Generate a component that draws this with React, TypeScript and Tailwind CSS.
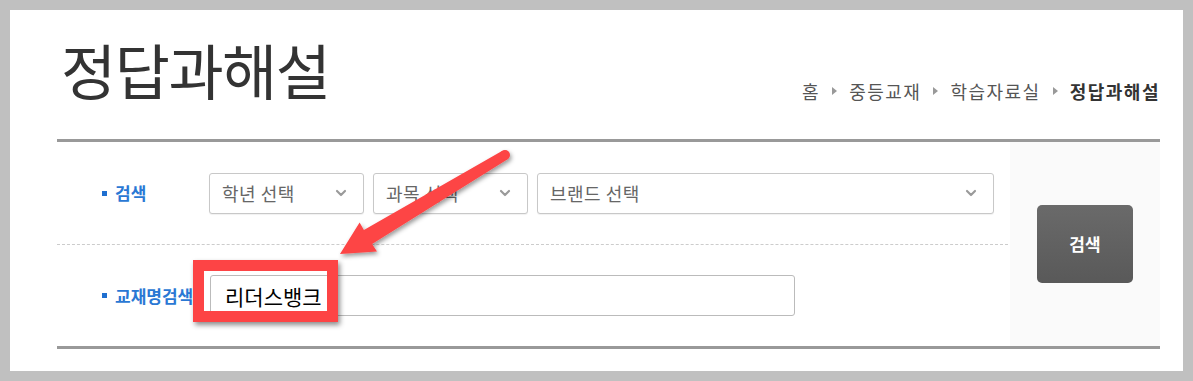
import { ChevronDown } from "lucide-react";

const font = { fontFamily: '"Noto Sans CJK KR", "Noto Sans", sans-serif' };

function Crumb({ last, children }: { last?: boolean; children: string }) {
  return (
    <span className={last ? "font-bold text-[#333]" : "text-[#555]"}>{children}</span>
  );
}

function Sep() {
  return (
    <span className="mx-[12px] inline-block w-0 h-0 border-y-[4px] border-y-transparent border-l-[5px] border-l-[#999] align-middle" />
  );
}

function Select({ label, width }: { label: string; width: string }) {
  return (
    <div
      className={`${width} h-[41px] flex items-center justify-between pl-[12px] pr-[14px] border border-[#c8c8c8] rounded-[3px] bg-white shadow-[0_1px_1px_rgba(0,0,0,0.06)]`}
    >
      <span className="text-[18px] tracking-[0.5px] text-[#666]">{label}</span>
      <ChevronDown size={16} strokeWidth={3.2} className="text-[#9a9a9a]" />
    </div>
  );
}

function Label({ children }: { children: string }) {
  return (
    <div className="w-[152px] shrink-0 flex items-center pl-[45px]">
      <span className="w-[5px] h-[5px] bg-[#1e6fd0] mr-[8px]" />
      <span className="text-[17px] font-bold text-[#2a78d4]">{children}</span>
    </div>
  );
}

export default function App() {
  return (
    <div className="relative w-[1193px] h-[381px] bg-[#c0c0c0] p-[10px]" style={font}>
      <div className="bg-white h-full pl-[47px] pr-[23px]">
        <div className="h-[129px] flex justify-between">
          <h1 className="mt-[29px] pl-[4px] text-[60px] leading-none tracking-[-1.5px] text-[#333]">
            정답과해설
          </h1>
          <div className="self-end mb-[36px] text-[18px] tracking-[1.5px] leading-[24px] flex items-center">
            <Crumb>홈</Crumb>
            <Sep />
            <Crumb>중등교재</Crumb>
            <Sep />
            <Crumb>학습자료실</Crumb>
            <Sep />
            <Crumb last>정답과해설</Crumb>
          </div>
        </div>

        <div className="flex border-y-[3px] border-[#999] h-[210px]">
          <div className="flex-1 flex flex-col">
            <div className="h-[103px] flex items-center border-b border-dashed border-[#ccc] mr-[2px]">
              <Label>검색</Label>
              <div className="flex gap-[9px]">
                <Select label="학년 선택" width="w-[155px]" />
                <Select label="과목 선택" width="w-[155px]" />
                <Select label="브랜드 선택" width="w-[457px]" />
              </div>
            </div>
            <div className="flex-1 flex items-center">
              <Label>교재명검색</Label>
              <input
                readOnly
                value="리더스뱅크"
                className="ml-[1px] w-[585px] h-[41px] border border-[#bbb] rounded-[3px] pl-[14px] text-[21px] text-black outline-none"
                style={font}
              />
            </div>
          </div>
          <div className="w-[150px] bg-[#fafafa] flex items-center justify-center">
            <button className="w-[96px] h-[78px] rounded-[5px] bg-gradient-to-b from-[#6a6a6a] to-[#595959] text-white text-[17px] font-bold">
              검색
            </button>
          </div>
        </div>
      </div>

      <div className="absolute left-[193px] top-[260px] w-[145px] h-[62px] border-[11px] border-[#fd4445] shadow-[2px_3px_5px_rgba(0,0,0,0.45)]" />

      <svg
        className="absolute left-0 top-0 pointer-events-none"
        width="1193"
        height="381"
        viewBox="0 0 1193 381"
      >
        <defs>
          <filter id="sh" x="-20%" y="-20%" width="140%" height="140%">
            <feDropShadow dx="1.5" dy="2.5" stdDeviation="2" floodColor="#000" floodOpacity="0.4" />
          </filter>
        </defs>
        <g fill="#fd4445" filter="url(#sh)">
          <polygon points="502.4,150.7 363.9,230.1 359.6,222.4 340,254 377,251.6 372.1,243.9 507.6,159.3" />
          <circle cx="505" cy="155" r="5" />
        </g>
      </svg>
    </div>
  );
}
